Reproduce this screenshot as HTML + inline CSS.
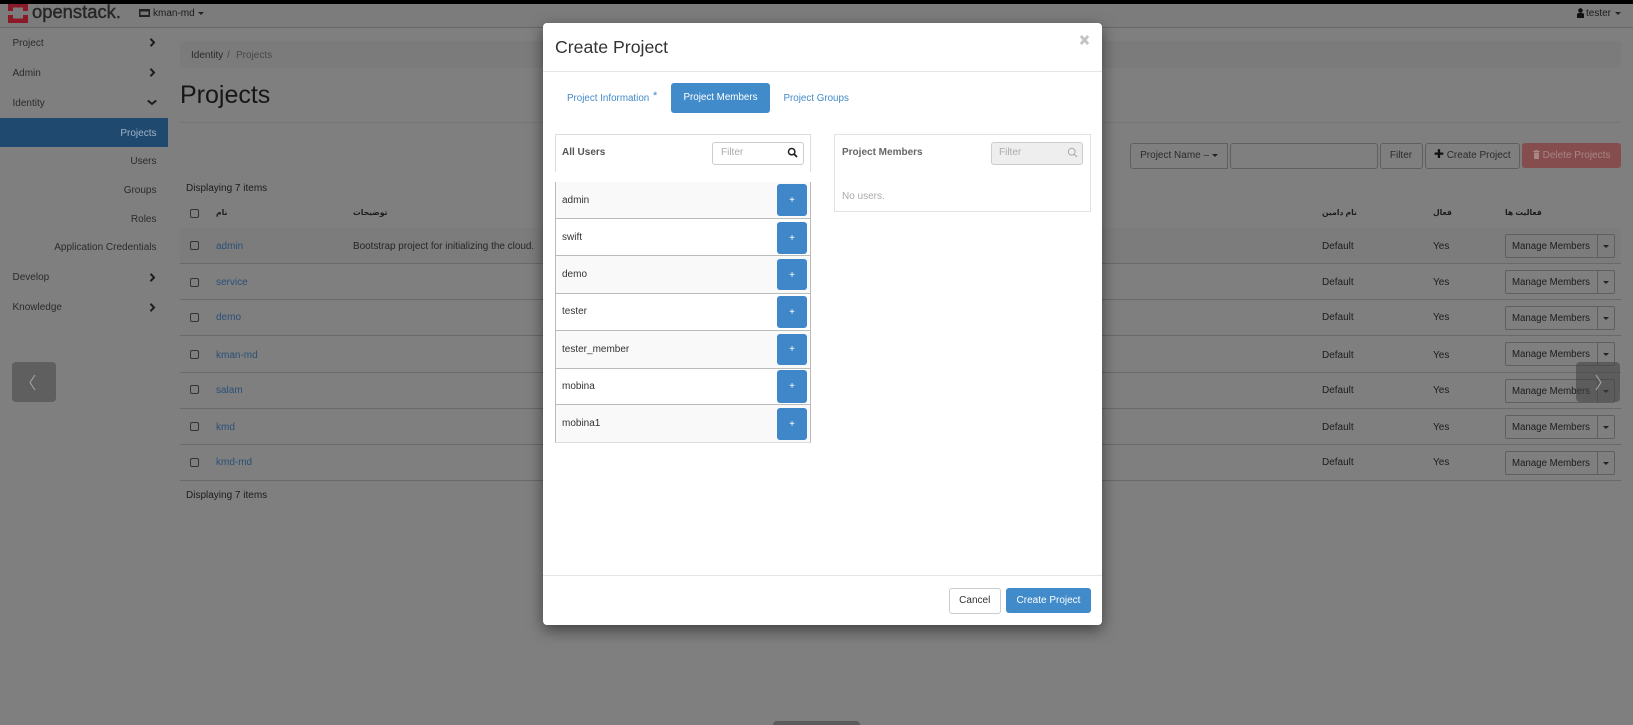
<!DOCTYPE html>
<html><head><meta charset="utf-8"><title>Create Project</title>
<style>
html,body{margin:0;padding:0;width:1633px;height:725px;overflow:hidden;background:#7f7f7f}
body{font-family:"Liberation Sans","DejaVu Sans",sans-serif;font-size:10px;color:#1c1c1c;position:relative}
div,svg{position:absolute}
.t{position:absolute;white-space:nowrap;line-height:14px;height:14px;margin-top:1px}
.s{color:#2b2b2b}
.r{text-align:right;right:1476.5px}
.l{color:#2a5078}
.a{font-size:7.7px;font-weight:bold}
.cb{width:7px;height:7px;border:1.2px solid #333;border-radius:2px;left:190px;margin-top:-.5px}
.ln{left:180px;width:1441px;height:1px;background:#696969}
.mm{left:1504.5px;width:91px;height:21.5px;border:1px solid #5f5f5f;border-radius:2px 0 0 2px;box-sizing:content-box;line-height:23px;text-align:center;font-size:9.7px;white-space:nowrap}
.mc{left:1596.5px;width:17px;height:21.5px;border:1px solid #5f5f5f;border-left:0;border-radius:0 2px 2px 0}
.mc i{position:absolute;left:6px;top:10px;border:3px solid transparent;border-top-color:#222;border-bottom:0}
.tb{border:1px solid #5f5f5f;border-radius:3px;height:23.5px;top:143px;line-height:24.5px;text-align:center;white-space:nowrap;box-sizing:content-box}
.car{width:44px;height:40px;background:#5f5f5f;border-radius:4px;top:362px}
.u{left:562px;color:#333;white-space:nowrap;line-height:14px}
.ur{left:554.5px;width:254px;border-left:1px solid #bbb;border-right:1px solid #bbb;border-bottom:1px solid #bbb;box-sizing:content-box}
.b{left:777px;width:30px;background:#3f87c8;border-radius:3px;color:#fff;text-align:center;font-size:10px}
.m{font-size:9.8px}
</style></head><body>

<!-- top -->
<div style="left:0;top:0;width:1633px;height:4px;background:#000"></div>
<div style="left:0;top:4px;width:1633px;height:23px;background:#7c7c7c;border-bottom:1px solid #686868"></div>
<svg style="left:8px;top:4px" width="20" height="19" viewBox="0 0 20 19"><path d="M0 0H20V19H0Z" fill="#8a1a28"/><path d="M5 3.500H15V14.500H5Z" fill="#7c7c7c"/><path d="M0 7H5V11H0ZM15 7H20V11H15Z" fill="#7c7c7c"/></svg>
<div class="t" style="margin-top:0;left:32px;top:1px;height:22px;line-height:22px;font-size:18.4px;color:#262626;-webkit-text-stroke:.4px #262626">openstack.</div>
<svg style="left:139px;top:9px" width="11" height="8" viewBox="0 0 11 8"><path d="M0 0H11V8H0Z" fill="#222"/><path d="M1.500 2.500H9.500V6H1.500Z" fill="#777"/></svg>
<div class="t" style="left:153px;top:6px">kman-md</div>
<div style="left:198px;top:11.500px;border:3px solid transparent;border-top-color:#222;border-bottom:0"></div>
<svg style="left:1577px;top:8px" width="7" height="10" viewBox="0 0 7 10"><circle cx="3.500" cy="2.500" r="2.300" fill="#111"/><path d="M0 10V6.500Q0 5 2 5H5Q7 5 7 6.500V10Z" fill="#111"/></svg>
<div class="t" style="left:1586px;top:6px">tester</div>
<div style="left:1615px;top:11.500px;border:3px solid transparent;border-top-color:#222;border-bottom:0"></div>

<!-- sidebar -->
<div class="t s" style="left:12.500px;top:35.500px">Project</div>
<div class="t s" style="left:12.500px;top:65.500px">Admin</div>
<div class="t s" style="left:12.500px;top:96px">Identity</div>
<div style="left:0;top:118px;width:168px;height:29px;background:#20496f"></div>
<div class="t r" style="top:126px;color:#9fb3c6">Projects</div>
<div class="t r s" style="top:154px">Users</div>
<div class="t r s" style="top:183px">Groups</div>
<div class="t r s" style="top:211.500px">Roles</div>
<div class="t r s" style="top:240px">Application Credentials</div>
<div class="t s" style="left:12.500px;top:270px">Develop</div>
<div class="t s" style="left:12.500px;top:300px">Knowledge</div>
<svg style="left:149px;top:38px" width="7" height="9" viewBox="0 0 7 9"><path d="M1.500 .8L5 4.500L1.500 8.200" fill="none" stroke="#1c1c1c" stroke-width="2"/></svg>
<svg style="left:149px;top:68px" width="7" height="9" viewBox="0 0 7 9"><path d="M1.500 .8L5 4.500L1.500 8.200" fill="none" stroke="#1c1c1c" stroke-width="2"/></svg>
<svg style="left:146.500px;top:99px" width="10" height="7" viewBox="0 0 10 7"><path d="M.8 1.500L5 5L9.200 1.500" fill="none" stroke="#1c1c1c" stroke-width="2"/></svg>
<svg style="left:149px;top:272.500px" width="7" height="9" viewBox="0 0 7 9"><path d="M1.500 .8L5 4.500L1.500 8.200" fill="none" stroke="#1c1c1c" stroke-width="2"/></svg>
<svg style="left:149px;top:302.500px" width="7" height="9" viewBox="0 0 7 9"><path d="M1.500 .8L5 4.500L1.500 8.200" fill="none" stroke="#1c1c1c" stroke-width="2"/></svg>

<!-- content -->
<div style="left:180px;top:41px;width:1441px;height:27px;background:#7b7b7b;border-radius:3px"></div>
<div class="t" style="left:191px;top:47.500px;color:#2b2b2b">Identity</div>
<div class="t" style="left:227px;top:47.500px;color:#484848">/</div>
<div class="t" style="left:236px;top:47.500px;color:#484848">Projects</div>
<div class="t" style="margin-top:0;left:180px;top:80px;font-size:25px;height:30px;line-height:30px;color:#161616">Projects</div>
<div style="left:180px;top:122px;width:1441px;height:1px;background:#767676"></div>

<div class="tb" style="left:1130px;width:96px;border-radius:3px 0 0 3px;color:#2b2b2b">Project Name – <span style="display:inline-block;border:3px solid transparent;border-top-color:#222;border-bottom:0;vertical-align:1px"></span></div>
<div class="tb" style="left:1230px;width:146px"></div>
<div class="tb" style="left:1379.500px;width:41px;color:#2b2b2b">Filter</div>
<div class="tb" style="left:1424.500px;width:93.500px;color:#2b2b2b"><b style="font-size:12px;line-height:10px;color:#111">✚</b> Create Project</div>
<div class="tb" style="left:1522px;width:99px;background:#854d4d;border:0;height:25px;line-height:26px;color:#a98585"><svg style="position:static;vertical-align:-1px;margin-right:3px" width="7" height="9" viewBox="0 0 7 9"><path d="M0 1H7V2H0ZM2 0H5V1H2ZM1 2.500H6V9H1Z" fill="#a98585"/></svg>Delete Projects</div>

<div class="t" style="left:186px;top:180.500px">Displaying 7 items</div>

<!-- header -->
<div class="cb" style="top:209px"></div>
<div class="t a" dir="rtl" style="left:216px;top:205px">نام</div>
<div class="t a" dir="rtl" style="left:353px;top:205px">توضیحات</div>
<div class="t a" dir="rtl" style="left:1322px;top:205px">نام دامین</div>
<div class="t a" dir="rtl" style="left:1433px;top:205px">فعال</div>
<div class="t a" dir="rtl" style="left:1505px;top:205px">فعالیت ها</div>

<!-- rows -->
<div style="left:180px;top:228px;width:1441px;height:35.500px;background:#7c7c7c"></div>
<div class="ln" style="top:263px"></div><div class="ln" style="top:299px"></div><div class="ln" style="top:335px"></div><div class="ln" style="top:372px"></div><div class="ln" style="top:408px"></div><div class="ln" style="top:444px"></div><div class="ln" style="top:480px"></div>

<div class="cb" style="top:241px"></div><div class="t l" style="left:216px;top:239px">admin</div>
<div class="t" style="left:353px;top:239px;color:#262626;font-size:9.950px">Bootstrap project for initializing the cloud.</div>
<div class="cb" style="top:278px"></div><div class="t l" style="left:216px;top:275px">service</div>
<div class="cb" style="top:313px"></div><div class="t l" style="left:216px;top:310px">demo</div>
<div class="cb" style="top:350px"></div><div class="t l" style="left:216px;top:347.500px">kman-md</div>
<div class="cb" style="top:385px"></div><div class="t l" style="left:216px;top:382.500px">salam</div>
<div class="cb" style="top:422px"></div><div class="t l" style="left:216px;top:419.500px">kmd</div>
<div class="cb" style="top:458px"></div><div class="t l" style="left:216px;top:455px">kmd-md</div>

<div class="t" style="left:1322px;top:239px">Default</div><div class="t" style="left:1433px;top:239px">Yes</div>
<div class="t" style="left:1322px;top:275px">Default</div><div class="t" style="left:1433px;top:275px">Yes</div>
<div class="t" style="left:1322px;top:310px">Default</div><div class="t" style="left:1433px;top:310px">Yes</div>
<div class="t" style="left:1322px;top:347.500px">Default</div><div class="t" style="left:1433px;top:347.500px">Yes</div>
<div class="t" style="left:1322px;top:382.500px">Default</div><div class="t" style="left:1433px;top:382.500px">Yes</div>
<div class="t" style="left:1322px;top:419.500px">Default</div><div class="t" style="left:1433px;top:419.500px">Yes</div>
<div class="t" style="left:1322px;top:455px">Default</div><div class="t" style="left:1433px;top:455px">Yes</div>

<div class="mm" style="top:234px">Manage Members</div><div class="mc" style="top:234px"><i></i></div>
<div class="mm" style="top:270px">Manage Members</div><div class="mc" style="top:270px"><i></i></div>
<div class="mm" style="top:306px">Manage Members</div><div class="mc" style="top:306px"><i></i></div>
<div class="mm" style="top:342px">Manage Members</div><div class="mc" style="top:342px"><i></i></div>
<div class="mm" style="top:379px">Manage Members</div><div class="mc" style="top:379px"><i></i></div>
<div class="mm" style="top:415px">Manage Members</div><div class="mc" style="top:415px"><i></i></div>
<div class="mm" style="top:451px">Manage Members</div><div class="mc" style="top:451px"><i></i></div>

<div class="t" style="left:186px;top:488px">Displaying 7 items</div>

<!-- carousel controls -->
<div class="car" style="left:12px"></div>
<svg style="left:28px;top:372px" width="10" height="20" viewBox="0 0 10 20"><path d="M7 3L2 10.500L7 18" fill="none" stroke="#a8a8a8" stroke-width="1"/></svg>
<div class="car" style="left:1576px;background:rgba(64,64,64,.55)"></div>
<svg style="left:1594px;top:372px" width="10" height="20" viewBox="0 0 10 20"><path d="M2 3L7 10.500L2 18" fill="none" stroke="#a8a8a8" stroke-width="1"/></svg>
<div style="left:772.500px;top:721px;width:87px;height:4px;background:#5c5c5c;border-radius:4px 4px 0 0"></div>

<!-- modal -->
<div style="left:542.500px;top:22.500px;width:559.500px;height:602.500px;background:#fff;border-radius:4px;box-shadow:0 5px 15px rgba(0,0,0,.5)"></div>
<div class="t" style="margin-top:0;left:555px;top:35px;font-size:17.700px;height:24px;line-height:24px;color:#333">Create Project</div>
<svg style="left:1079px;top:34px" width="11" height="12" viewBox="0 0 11 12"><path d="M1.800 2L9.200 10M9.200 2L1.800 10" stroke="#c4c4c4" stroke-width="2.800" fill="none"/></svg>
<div style="left:542.500px;top:71px;width:559.500px;height:1px;background:#e5e5e5"></div>

<div class="t m" style="left:567px;top:90.500px;color:#428bca">Project Information</div>
<div class="t" style="left:653px;top:87.500px;color:#428bca;font-size:11px">*</div>
<div class="t m" style="margin-top:0;left:671px;top:83px;width:99px;height:30px;line-height:30px;background:#428bca;color:#fff;text-align:center;border-radius:3px">Project Members</div>
<div class="t m" style="left:783.500px;top:90.500px;color:#428bca">Project Groups</div>

<!-- all users panel -->
<div style="left:554.500px;top:134px;width:254px;height:37px;border:1px solid #ddd;border-bottom:0"></div>
<div class="t" style="left:562px;top:144.500px;font-weight:bold;color:#555">All Users</div>
<div style="left:711.500px;top:141.500px;width:90px;height:21px;border:1px solid #ccc;border-radius:3px;background:#fff"></div>
<div class="t" style="left:721px;top:144.500px;color:#aaa">Filter</div>
<svg style="left:787px;top:146.500px" width="11" height="11" viewBox="0 0 11 11"><circle cx="4.700" cy="4.700" r="3.200" fill="none" stroke="#222" stroke-width="1.500"/><path d="M7 7L10 10" stroke="#222" stroke-width="1.800"/></svg>

<!-- members panel -->
<div style="left:834px;top:134px;width:255px;height:76px;border:1px solid #e2e2e2"></div>
<div class="t" style="left:842px;top:144.500px;font-weight:bold;color:#666">Project Members</div>
<div style="left:991px;top:141.500px;width:90px;height:21px;border:1px solid #ccc;border-radius:3px;background:#eee"></div>
<div class="t" style="left:999px;top:144.500px;color:#aaa">Filter</div>
<svg style="left:1067px;top:146.500px" width="11" height="11" viewBox="0 0 11 11"><circle cx="4.700" cy="4.700" r="3.400" fill="none" stroke="#aaa" stroke-width="1"/><path d="M7 7L10 10" stroke="#aaa" stroke-width="1.200"/></svg>
<div class="t" style="left:842px;top:189px;color:#aaa">No users.</div>

<!-- list -->
<div class="ur" style="top:182px;height:35.500px;background:#f9f9f9"></div>
<div class="ur" style="top:218.500px;height:36px;background:#fff"></div>
<div class="ur" style="top:255.500px;height:37px;background:#f9f9f9"></div>
<div class="ur" style="top:293.500px;height:36px;background:#fff"></div>
<div class="ur" style="top:330.500px;height:37px;background:#f9f9f9"></div>
<div class="ur" style="top:368.500px;height:35px;background:#fff"></div>
<div class="ur" style="top:404.500px;height:37px;background:#f9f9f9;border-bottom-color:#ddd"></div>

<div class="t u" style="top:193px">admin</div>
<div class="t u" style="top:230px">swift</div>
<div class="t u" style="top:266.500px">demo</div>
<div class="t u" style="top:304px">tester</div>
<div class="t u" style="top:342px">tester_member</div>
<div class="t u" style="top:379px">mobina</div>
<div class="t u" style="top:415.500px">mobina1</div>

<div class="b" style="top:184px;height:32px;line-height:33px">+</div>
<div class="b" style="top:222px;height:32px;line-height:33px">+</div>
<div class="b" style="top:259px;height:31px;line-height:33px">+</div>
<div class="b" style="top:296px;height:32px;line-height:33px">+</div>
<div class="b" style="top:334px;height:31px;line-height:32px">+</div>
<div class="b" style="top:370px;height:33px;line-height:33px">+</div>
<div class="b" style="top:408px;height:32px;line-height:33px">+</div>

<!-- footer -->
<div style="left:542.500px;top:575px;width:559.500px;height:1px;background:#e5e5e5"></div>
<div style="left:948.500px;top:588px;width:50.500px;height:23.500px;border:1px solid #ccc;border-radius:3px;text-align:center;line-height:23.500px;color:#333;background:#fff">Cancel</div>
<div style="left:1006px;top:588px;width:85px;height:25px;background:#428bca;border-radius:3px;text-align:center;line-height:25px;color:#fff">Create Project</div>

</body></html>
